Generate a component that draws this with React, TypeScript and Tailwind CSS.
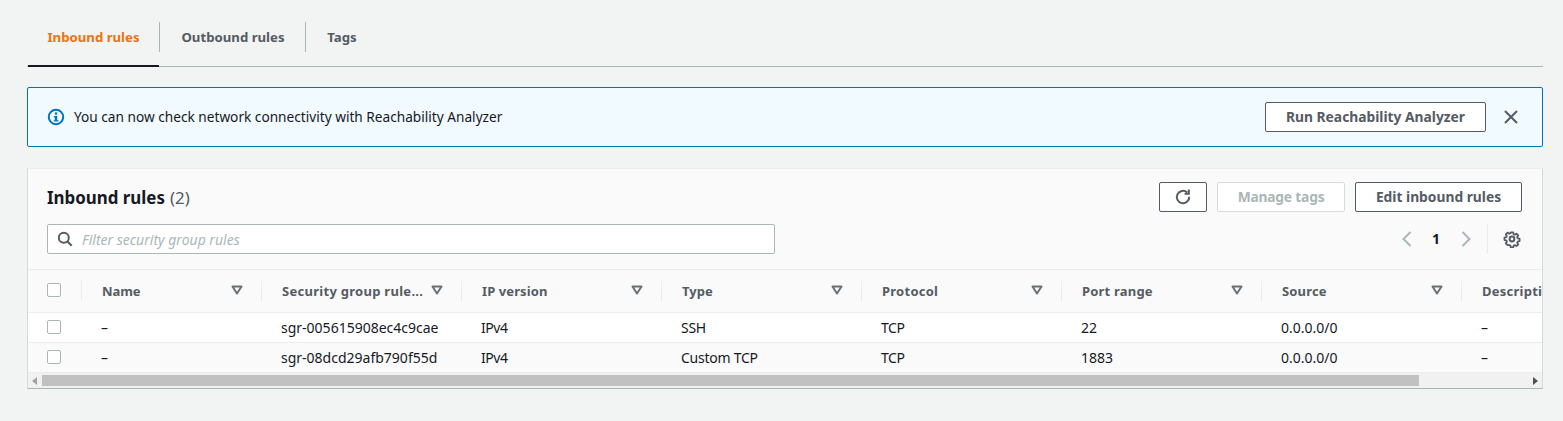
import React from 'react';

const columns = [
  { label: 'Name', width: 'w-[180px]', tracking: 'tracking-[-0.1px]' },
  { label: 'Security group rule...', width: 'w-[200px]', tracking: 'tracking-[0.28px]' },
  { label: 'IP version', width: 'w-[200px]', tracking: 'tracking-[0.1px]' },
  { label: 'Type', width: 'w-[200px]', tracking: 'tracking-[0px]' },
  { label: 'Protocol', width: 'w-[200px]', tracking: 'tracking-[0.25px]' },
  { label: 'Port range', width: 'w-[200px]', tracking: 'tracking-[0.2px]' },
  { label: 'Source', width: 'w-[200px]', tracking: 'tracking-[0.15px]' },
  { label: 'Description', width: 'w-[200px]', tracking: 'tracking-[0.25px]' },
];

const cellTracking = [
  'tracking-[0px]',
  'tracking-[0px]',
  'tracking-[-0.45px]',
  'tracking-[-0.25px]',
  'tracking-[-0.45px]',
  'tracking-[0px]',
  'tracking-[0px]',
  'tracking-[0px]',
];

const rows = [
  ['–', 'sgr-005615908ec4c9cae', 'IPv4', 'SSH', 'TCP', '22', '0.0.0.0/0', '–'],
  ['–', 'sgr-08dcd29afb790f55d', 'IPv4', 'Custom TCP', 'TCP', '1883', '0.0.0.0/0', '–'],
];

const Checkbox: React.FC = () => (
  <div className="w-[14px] h-[14px] rounded-[2px] border border-[#aab7b8] bg-white" />
);

const SortIcon: React.FC = () => (
  <svg width="12" height="10" viewBox="0 0 12 10" className="shrink-0">
    <path d="M1.5 1.5h9L6 8.5z" fill="none" stroke="#687078" strokeWidth="2" strokeLinejoin="round" />
  </svg>
);

export default function App() {
  return (
    <div className="w-[1563px] h-[421px] overflow-hidden bg-[#f2f3f3] text-[#16191f] font-['Noto_Sans','Open_Sans',sans-serif] text-[13px]">
      {/* Tabs */}
      <div className="pl-[27px] pr-[20px] pt-[22px]">
        <div className="flex border-b border-[#aab7b8] h-[45px] pl-[1px]">
          <div className="relative w-[132px] h-[45px] flex justify-center pt-[6px] pr-[1px]">
            <span className="text-[13.2px] font-bold text-[#ec7211] leading-[18px]">Inbound rules</span>
            <div className="absolute right-0 top-0 w-px h-[30px] bg-[#aab7b8]" />
            <div className="absolute left-0 bottom-0 w-[131px] h-[2px] bg-[#16191f]" />
          </div>
          <div className="relative w-[146px] h-[45px] flex justify-center pt-[6px]">
            <span className="text-[13.2px] font-bold text-[#545b64] leading-[18px]">Outbound rules</span>
            <div className="absolute right-0 top-0 w-px h-[30px] bg-[#aab7b8]" />
          </div>
          <div className="w-[72px] h-[45px] flex justify-center pt-[6px]">
            <span className="text-[13.2px] font-bold text-[#545b64] leading-[18px]">Tags</span>
          </div>
        </div>
      </div>

      {/* Info alert */}
      <div className="ml-[27px] mr-[20px] mt-[20px] h-[60px] rounded-[2px] border border-[#0073bb] bg-[#f1faff] flex items-center pl-[19px] pr-[23px]">
        <svg width="18" height="18" viewBox="0 0 18 18" className="shrink-0">
          <circle cx="9" cy="9" r="7.2" fill="none" stroke="#0073bb" strokeWidth="2" />
          <rect x="7.8" y="4.4" width="2.4" height="2.2" fill="#0073bb" />
          <path d="M6.8 8h3.4v4.2h1.2v1.3H6.8v-1.3h1V9.3h-1z" fill="#0073bb" />
        </svg>
        <span className="ml-[9px] text-[13.66px] leading-[18px]">You can now check network connectivity with Reachability Analyzer</span>
        <div className="ml-auto flex items-center">
          <button className="w-[221px] h-[30px] rounded-[2px] border border-[#545b64] bg-white text-[13.8px] font-bold text-[#545b64]">Run Reachability Analyzer</button>
          <svg width="16" height="16" viewBox="0 0 16 16" className="ml-[17px] shrink-0">
            <path d="M2 2l12 12M14 2L2 14" stroke="#545b64" strokeWidth="2" fill="none" />
          </svg>
        </div>
      </div>

      {/* Rules panel */}
      <div className="ml-[27px] mr-[20px] mt-[21px] h-[221px] border-t border-[#eaeded] border-r border-r-[#d5dbdb] border-l border-l-[#d5dbdb] border-b border-b-[#aab7b8] bg-[#fafafa] overflow-hidden">
        <div className="h-[101px] pl-[19px] pr-[20px] pt-[13px] border-b border-[#eaeded]">
          <div className="flex items-center h-[30px]">
            <span className="text-[16.9px] font-bold leading-[22px] mt-[2px]">Inbound rules</span>
            <span className="ml-[5px] text-[16.9px] leading-[22px] text-[#545b64] mt-[2px]">(2)</span>
            <div className="ml-auto flex gap-[10px]">
              <button className="w-[48px] h-[30px] rounded-[2px] border border-[#545b64] bg-white flex items-center justify-center">
                <svg width="18" height="18" viewBox="0 0 18 18">
                  <path d="M15.2 8.8a6.2 6.2 0 1 1-2-4.3" fill="none" stroke="#545b64" strokeWidth="2" />
                  <path d="M14.8 1.5v4.2h-4.2" fill="none" stroke="#545b64" strokeWidth="2" />
                </svg>
              </button>
              <button className="w-[128px] h-[30px] rounded-[2px] border border-[#d5dbdb] bg-white text-[13.8px] tracking-[-0.2px] font-bold text-[#aab7b8]">Manage tags</button>
              <button className="w-[167px] h-[30px] rounded-[2px] border border-[#545b64] bg-white text-[13.8px] font-bold text-[#545b64]">Edit inbound rules</button>
            </div>
          </div>
          <div className="flex items-center mt-[12px] h-[30px]">
            <div className="w-[728px] h-[30px] rounded-[2px] border border-[#aab7b8] bg-white flex items-center pl-[9px]">
              <svg width="16" height="16" viewBox="0 0 16 16" className="shrink-0">
                <circle cx="6.8" cy="6.8" r="5" fill="none" stroke="#545b64" strokeWidth="2" />
                <path d="M10.5 10.5l4.2 4.2" stroke="#545b64" strokeWidth="2" fill="none" />
              </svg>
              <span className="ml-[9px] mt-[1px] text-[14px] italic text-[#aab7b8] leading-[18px]">Filter security group rules</span>
            </div>
            <div className="ml-auto flex items-center h-[30px]">
              <svg width="12" height="16" viewBox="0 0 12 16">
                <path d="M9.5 1L2.5 8l7 7" fill="none" stroke="#aab7b8" strokeWidth="2" />
              </svg>
              <span className="ml-[19px] mr-[20px] w-[8px] text-[14px] font-bold leading-none">1</span>
              <svg width="12" height="16" viewBox="0 0 12 16">
                <path d="M2.5 1l7 7-7 7" fill="none" stroke="#aab7b8" strokeWidth="2" />
              </svg>
              <div className="ml-[15px] w-px h-[30px] bg-[#eaeded]" />
              <svg width="18" height="18" viewBox="0 0 18 18" className="ml-[15px] mr-[1px]">
                <path d="M7.6 1.5h2.8l.4 2.1 1.4.6 1.8-1.2 2 2-1.2 1.8.6 1.4 2.1.4v2.8l-2.1.4-.6 1.4 1.2 1.8-2 2-1.8-1.2-1.4.6-.4 2.1H7.6l-.4-2.1-1.4-.6L4 15.8l-2-2 1.2-1.8-.6-1.4-2.1-.4V7.4l2.1-.4.6-1.4L2 3.8l2-2 1.8 1.2 1.4-.6z" transform="translate(1 1) scale(.89)" fill="none" stroke="#545b64" strokeWidth="2" strokeLinejoin="round" />
                <circle cx="9" cy="9" r="2.4" fill="none" stroke="#545b64" strokeWidth="2" />
              </svg>
            </div>
          </div>
        </div>

        {/* Table header */}
        <div className="flex h-[43px] items-center border-b border-[#eaeded] bg-[#fafafa] whitespace-nowrap">
          <div className="w-[54px] shrink-0 flex items-center h-[21px] pl-[19px] -mt-[3px] border-r border-[#eaeded]">
            <Checkbox />
          </div>
          {columns.map((col, i) => (
            <div key={col.label} className={`${col.width} shrink-0 h-[21px] flex items-center pl-[20px] pr-[18px] justify-between ${i < 7 ? 'border-r border-[#eaeded]' : ''}`}>
              <span className={`text-[13px] ${col.tracking} font-bold text-[#545b64] leading-none`}>{col.label}</span>
              <div className="-mt-[2px]"><SortIcon /></div>
            </div>
          ))}
        </div>

        {/* Table rows */}
        {rows.map((row, r) => (
          <div key={r} className={`flex h-[30px] items-center border-b border-[#eaeded] whitespace-nowrap ${r === 0 ? 'bg-white' : 'bg-[#fafafa]'}`}>
            <div className="w-[54px] shrink-0 pl-[19px] -mt-[2px]">
              <Checkbox />
            </div>
            {row.map((cell, c) => (
              <div key={c} className={`${columns[c].width} shrink-0 pl-[19px] text-[14px] ${cellTracking[c]} leading-[18px]`}>{cell}</div>
            ))}
          </div>
        ))}

        {/* Scrollbar */}
        <div className="h-[15px] bg-[#f1f1f1] flex items-center">
          <svg width="6" height="8" viewBox="0 0 6 8" className="ml-[4px] shrink-0">
            <path d="M5 0v8L0 4z" fill="#a3a3a3" />
          </svg>
          <div className="ml-[4px] w-[1377px] h-[11px] bg-[#c1c1c1]" />
          <svg width="6" height="8" viewBox="0 0 6 8" className="ml-auto mr-[4px] shrink-0">
            <path d="M1 0v8l5-4z" fill="#505050" />
          </svg>
        </div>
      </div>
    </div>
  );
}
